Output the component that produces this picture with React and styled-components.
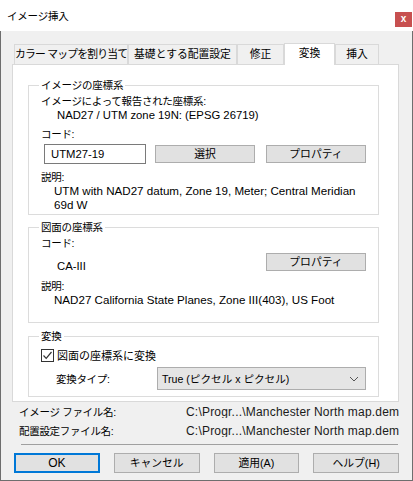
import React from "react";
import styled, { createGlobalStyle } from "styled-components";

const GlobalStyle = createGlobalStyle`
  body {
    margin: 0;
    font-family: "Liberation Sans", "Noto Sans CJK JP", sans-serif;
    font-size: 11px;
    color: #000;
  }
  * { box-sizing: border-box; }
`;

const Window = styled.div`
  width: 413px;
  height: 481px;
  display: flex;
  flex-direction: column;
  background: #f0f0f0;
  overflow: hidden;
`;

const TitleBar = styled.div`
  height: 31px;
  flex: none;
  background: #fff;
  display: flex;
  justify-content: space-between;
  align-items: flex-start;
`;

const Title = styled.div`
  padding: 9px 0 0 7px;
  font-size: 10.5px;
  letter-spacing: -0.2px;
  line-height: 14px;
`;

const CloseButton = styled.div`
  width: 17px;
  height: 15px;
  margin: 12px 1px 0 0;
  background: #c75050;
  color: #fff;
  font-size: 10px;
  font-weight: bold;
  line-height: 14px;
  text-align: center;
`;

const Body = styled.div`
  flex: 1;
  border: 1px solid #6e6e6e;
  border-top: none;
  padding: 11px 13px 0 11px;
  display: flex;
  flex-direction: column;
`;

const TabStrip = styled.div`
  display: flex;
  align-items: flex-end;
  margin-left: 2px;
  height: 22px;
`;

const Tab = styled.div`
  position: relative;
  width: ${p => p.w}px;
  height: ${p => (p.active ? 22 : 20)}px;
  margin-bottom: ${p => (p.active ? -1 : 0)}px;
  z-index: ${p => (p.active ? 1 : 0)};
  background: ${p => (p.active ? "#fff" : "#f0f0f0")};
  border: 1px solid #d9d9d9;
  border-bottom: none;
  font-size: 10.8px;
  letter-spacing: ${p => p.ls || 0}px;
  line-height: 18px;
  text-align: center;
  white-space: nowrap;
  overflow: hidden;
`;

const Panel = styled.div`
  width: 387px;
  height: 338px;
  background: #fff;
  border: 1px solid #d9d9d9;
  padding: 13px 0 0 15px;
  display: flex;
  flex-direction: column;
`;

const Group = styled.fieldset`
  width: 351px;
  height: ${p => p.h}px;
  margin: ${p => p.top || 0}px 0 0;
  padding: 0 12px;
  min-width: 0;
  border: 1px solid #dcdcdc;
  display: flex;
  flex-direction: column;
`;

const Legend = styled.legend`
  margin-left: -2px;
  padding: 0 2px;
  font-size: 10.5px;
  letter-spacing: -0.2px;
  line-height: 14px;
`;

const Label = styled.div`
  font-size: 10.5px;
  letter-spacing: -0.3px;
  line-height: 14px;
  margin-top: ${p => p.top || 0}px;
  white-space: nowrap;
`;

const Value = styled.div`
  font-size: 11.3px;
  line-height: 14px;
  margin-top: ${p => p.top || 0}px;
  padding-left: ${p => p.indent || 0}px;
  white-space: nowrap;
`;

const Description = styled.div`
  font-size: 11.6px;
  line-height: 14px;
  padding-left: 13px;
  height: ${p => p.h || 14}px;
  overflow: hidden;
`;

const Row = styled.div`
  display: flex;
  align-items: flex-start;
  margin-top: ${p => p.top || 0}px;
`;

const TextBox = styled.div`
  width: 102px;
  height: 20px;
  margin-left: 3px;
  border: 1px solid #7a7a7a;
  background: #fff;
  padding-left: 6px;
  font-size: 11.3px;
  line-height: 18px;
`;

const Button = styled.div`
  width: ${p => p.w || 100}px;
  height: ${p => p.h || 18}px;
  margin-top: ${p => p.top || 0}px;
  margin-left: ${p => (p.left === "auto" ? "auto" : `${p.left || 0}px`)};
  background: #e1e1e1;
  border: ${p => (p.focused ? "2px solid #0078d7" : "1px solid #adadad")};
  font-size: ${p => p.fs || 10.8}px;
  line-height: ${p => (p.h || 18) - (p.focused ? 4 : 2)}px;
  text-align: center;
  white-space: nowrap;
`;

const CheckRow = styled.label`
  display: flex;
  align-items: center;
  height: 14px;
  margin-top: 5px;
  gap: 3px;
  font-size: 11px;
`;

const CheckBox = styled.span`
  width: 13px;
  height: 13px;
  border: 1px solid #333;
  background: #fff;
  display: flex;
  align-items: center;
  justify-content: center;
`;

const SelectBox = styled.div`
  width: 209px;
  height: 23px;
  margin-left: auto;
  background: #e5e5e5;
  border: 1px solid #adadad;
  display: flex;
  align-items: center;
  justify-content: space-between;
  padding: 0 6px 0 4px;
  font-size: 10.6px;
`;

const SelectLabel = styled(Label)`
  margin-top: 5px;
  margin-left: 15px;
`;

const InfoGrid = styled.div`
  display: grid;
  grid-template-columns: 167px 1fr;
  row-gap: 5px;
  margin: 3px 0 0 7px;
`;

const InfoLabel = styled.div`
  font-size: 10.5px;
  letter-spacing: -0.3px;
  line-height: 14px;
  white-space: nowrap;
`;

const InfoValue = styled.div`
  height: 13px;
  font-size: 12px;
  letter-spacing: 0.2px;
  line-height: 14px;
  overflow: hidden;
  white-space: nowrap;
  color: #1a1a1a;
`;

const Separator = styled.div`
  margin: 6px 0 0 9px;
  width: 377px;
  height: 1px;
  background: #a0a0a0;
`;

const ButtonBar = styled.div`
  display: flex;
  gap: 14px;
  margin: 8px 0 0 2px;
`;

const tabs = [
  { label: "カラー マップを割り当て", w: 114, ls: -0.8 },
  { label: "基礎とする配置設定", w: 109 },
  { label: "修正", w: 47 },
  { label: "変換", w: 51, active: true },
  { label: "挿入", w: 44 },
];

export default function App() {
  return (
    <>
      <GlobalStyle />
      <Window>
        <TitleBar>
          <Title>イメージ挿入</Title>
          <CloseButton>x</CloseButton>
        </TitleBar>
        <Body>
          <TabStrip>
            {tabs.map(t => (
              <Tab key={t.label} w={t.w} ls={t.ls} active={t.active}>
                {t.label}
              </Tab>
            ))}
          </TabStrip>
          <Panel>
            <Group h={137}>
              <Legend>イメージの座標系</Legend>
              <Label top={2}>イメージによって報告された座標系:</Label>
              <Value indent={16}>NAD27 / UTM zone 19N: (EPSG 26719)</Value>
              <Label top={5}>コード:</Label>
              <Row top={3}>
                <TextBox>UTM27-19</TextBox>
                <Button left={9} top={1}>選択</Button>
                <Button left={11} top={1}>プロパティ</Button>
              </Row>
              <Label top={6}>説明:</Label>
              <Description h={25}>
                UTM with NAD27 datum, Zone 19, Meter; Central Meridian 69d W
              </Description>
            </Group>

            <Group h={103} top={5}>
              <Legend>図面の座標系</Legend>
              <Label top={2}>コード:</Label>
              <Row top={3}>
                <Value top={6} indent={16}>CA-III</Value>
                <Button left="auto">プロパティ</Button>
              </Row>
              <Label top={6}>説明:</Label>
              <Description>
                NAD27 California State Planes, Zone III(403), US Foot
              </Description>
            </Group>

            <Group h={68} top={6}>
              <Legend>変換</Legend>
              <CheckRow>
                <CheckBox>
                  <svg width="11" height="11" viewBox="0 0 11 11">
                    <polyline
                      points="1.5,5.5 4.2,8.3 9.5,2"
                      fill="none"
                      stroke="#333"
                      strokeWidth="1.2"
                    />
                  </svg>
                </CheckBox>
                図面の座標系に変換
              </CheckRow>
              <Row top={5}>
                <SelectLabel>変換タイプ:</SelectLabel>
                <SelectBox>
                  <span>True (ピクセル x ピクセル)</span>
                  <svg width="10" height="6" viewBox="0 0 10 6">
                    <polyline
                      points="1,1 5,5 9,1"
                      fill="none"
                      stroke="#555"
                      strokeWidth="1"
                    />
                  </svg>
                </SelectBox>
              </Row>
            </Group>
          </Panel>

          <InfoGrid>
            <InfoLabel>イメージ ファイル名:</InfoLabel>
            <InfoValue>C:\Progr...\Manchester North map.dem</InfoValue>
            <InfoLabel>配置設定ファイル名:</InfoLabel>
            <InfoValue>C:\Progr...\Manchester North map.dem</InfoValue>
          </InfoGrid>
          <Separator />
          <ButtonBar>
            <Button w={86} h={20} fs={12} focused>OK</Button>
            <Button w={86} h={20}>キャンセル</Button>
            <Button w={86} h={20}>適用(A)</Button>
            <Button w={86} h={20}>ヘルプ(H)</Button>
          </ButtonBar>
        </Body>
      </Window>
    </>
  );
}
